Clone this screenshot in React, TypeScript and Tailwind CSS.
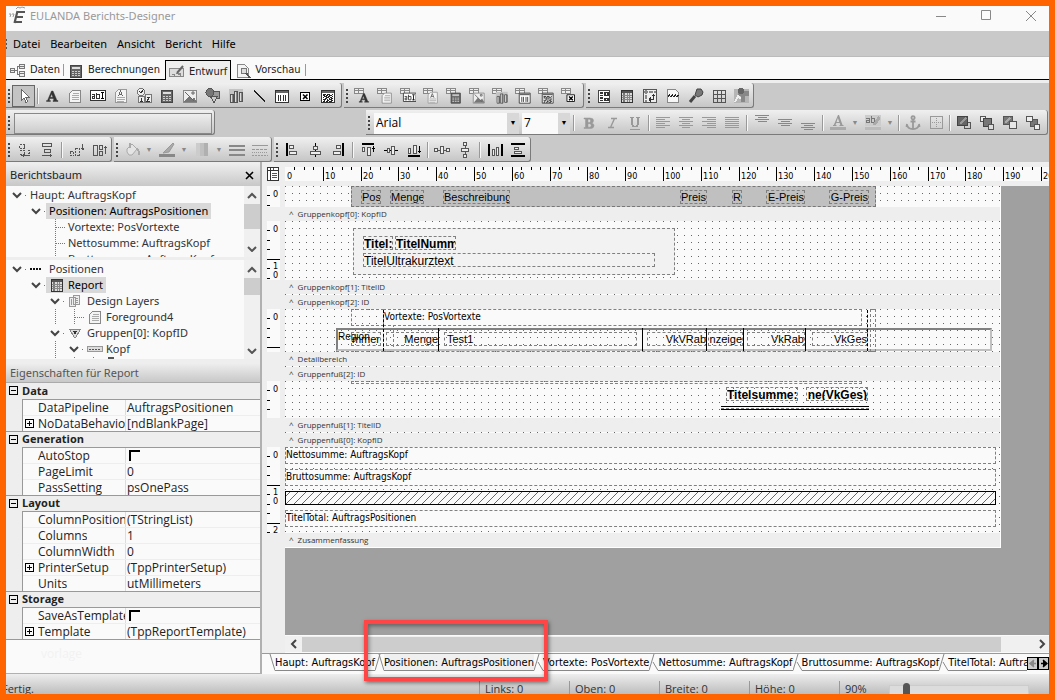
import { Fragment, type ReactNode } from "react";

const ui = "font-['Open_Sans',sans-serif]";
const tree = "font-['Noto_Sans',sans-serif]";
const narrow = "font-['DejaVu_Sans_Condensed','DejaVu_Sans',sans-serif]";
const arial = "font-['Liberation_Sans',Arial,sans-serif]";

/* ---------- icons ---------- */

function Icon({ children, soft }: { children: ReactNode; soft?: boolean }) {
  return (
    <svg
      width="16"
      height="16"
      viewBox="0 0 16 16"
      fill="none"
      stroke="#555"
      shapeRendering={soft ? "auto" : "crispEdges"}
      className="shrink-0"
      aria-hidden="true"
    >
      {children}
    </svg>
  );
}

const page = (
  <>
    <path d="M5.5 2.5h8v12h-11v-9z" fill="#f4f4f4" stroke="#888" />
    <path d="M6 5.5h6M5 7.5h7M5 9.5h7M5 11.5h7" stroke="#aaa" />
  </>
);
const calc = (
  <>
    <path d="M2.5 2.5h11v12h-11z" fill="#666" stroke="#444" />
    <path d="M4 4.5h8M4 5.5h8" stroke="#ddd" />
    <path d="M4 8.5h2m1 0h2m1 0h2M4 10.5h2m1 0h2m1 0h2M4 12.5h2m1 0h2m1 0h2" stroke="#ccc" />
  </>
);
const picture = (
  <>
    <path d="M1.5 2.5h13v12h-13z" fill="#eee" stroke="#888" />
    <path d="M2 14l5-6 3 3 2-2 3 5z" fill="#777" stroke="none" />
    <path d="M3 4l9 9M10 4h2v2h-2z" stroke="#666" shapeRendering="auto" />
  </>
);
const charts = (
  <>
    <path d="M1 1h14v12H1z" fill="#c4c4c4" stroke="none" />
    <path d="M2.5 6.5h3v8h-3zM6.5 3.5h3v11h-3zM11.5 4.5h3v9h-3z" fill="#888" stroke="#555" />
    <path d="M3.5 7v7M7.5 4v10M12.5 5v8" stroke="#ddd" />
  </>
);
const barcode = (
  <>
    <path d="M1.5 2.5h13v12h-13z" fill="#fff" stroke="#333" />
    <path d="M2 4h12" stroke="#666" strokeWidth="2" />
    <path d="M4.5 7v6M6.5 7v6M9.5 7v6M11.5 7v6" stroke="#333" />
  </>
);
const matrix = (
  <>
    <path d="M1.5 2.5h13v12h-13z" fill="#fff" stroke="#333" />
    <path d="M2 4h12" stroke="#666" strokeWidth="2" />
    <path
      d="M3 6.5h3m1 0h3m2 0h1M3 7.5h2m1 0h2m1 0h3M4 8.5h3m1 0h2m2 0h1M3 9.5h1m2 0h3m1 0h2M5 10.5h2m2 0h1m1 0h2M3 11.5h3m1 0h1m1 0h3M4 12.5h1m2 0h2m2 0h2M3 13.5h2m1 0h2m1 0h3"
      stroke="#222"
    />
  </>
);
const xBox = (
  <>
    <path d="M3.5 4.5h9v8h-9z" fill="#fff" stroke="#000" />
    <path d="M6 6.5l4.5 4.5M10.5 6.5L6 11" stroke="#000" strokeWidth="1.6" shapeRendering="auto" />
  </>
);
const letterA = (
  <path
    d="M7.5 3H9l4 9.5h1v1H9v-1h1l-.7-2H5.800l-.6 2h1.200v1H2.500v-1h1zM7.600 6L6.300 9.300h2.600z"
    fill="#333"
    stroke="#333"
    strokeWidth=".4"
    shapeRendering="auto"
  />
);
const memoA = (
  <>
    <path d="M5.5 1.5h8v13h-11v-10z" fill="#f4f4f4" stroke="#999" />
    <path d="M4 9.5h8M4 11.5h8M4 13.5h7" stroke="#aaa" />
    <path d="M5.500 8l2-5 2 5M6 6.500h3" stroke="#666" />
  </>
);
const editBox = (
  <>
    <path d="M.5 2.5h15v10H.5z" fill="#fff" stroke="#333" />
    <path d="M2 6.5h2.500v4H2.500v-2H4M6.500 4.500v6h3v-4h-3" stroke="#333" />
    <path d="M11 4.5h3M12.500 5v6M11 10.500h3" stroke="#000" />
  </>
);

const tools: Record<string, ReactNode> = {
  cursor: <path d="M5.5 1.5v11L8 10l2 4.500 1.800-.8-2-4.300h3.500z" fill="#fff" stroke="#666" />,
  label: letterA,
  memo: page,
  edit: editBox,
  richText: memoA,
  calcPages: (
    <>
      <circle cx="5" cy="4" r="3.5" fill="#eee" stroke="#777" />
      <path d="M2.5 8.5h6v6h-6zM9.5 6.5h6v8h-6z" fill="#eee" stroke="#777" />
      <path d="M3 3l2 2 3-4M5.500 9.500v4M4 13.500h3M11 9h3l-3 4h3" stroke="#333" />
    </>
  ),
  calc,
  picture,
  shapes: (
    <>
      <path d="M7.5 3.5h7v7h-7z" fill="#999" />
      <circle cx="5" cy="4.5" r="4" fill="#777" stroke="#555" />
      <path d="M5.5 8.5h7L9 14.500z" fill="#ccc" />
    </>
  ),
  charts,
  line: <path d="M3 3l11 10" stroke="#222" strokeWidth="1.5" />,
  barcode,
  xBox,
  matrix,
  subreport: (
    <>
      <path d="M2.5 2.5h11v12h-11z" fill="#fff" stroke="#444" />
      <path d="M4 5h3M4 7.500h3M9 4.500h3v3H9zM4 10h3M4 12.500h3M9 10.500h3v2H9z" stroke="#333" strokeWidth="1.5" />
    </>
  ),
  region: (
    <>
      <path d="M2.5 2.5h11v12h-11z" fill="#ddd" stroke="#333" />
      <path d="M3 4h10" stroke="#555" strokeWidth="2" />
      <path d="M4.5 5v9" stroke="#777" strokeWidth="2" />
      <path d="M3 7.5h10M3 9.5h10M3 11.5h10M8.5 5v9M10.5 5v9" stroke="#888" />
    </>
  ),
  cross: (
    <>
      <path d="M1.5 1.5h13v13h-13z" fill="#eee" stroke="#555" />
      <path d="M2 3.5h12M4 2v12" stroke="#888" strokeWidth="2" strokeDasharray="4 1" />
      <path d="M7 11.5h4.500v-5M7 11.500l2-2M7 11.500l2 2M11.500 6.500l-2 2M11.500 6.500l2 2" stroke="#333" />
    </>
  ),
  pageBreak: (
    <>
      <path d="M2.5 1.5h8l3 3v10h-11z" fill="#f6f6f6" stroke="#888" />
      <path d="M3 9l1.500-2L6 9l1.500-2L9 9l1.500-2L12 9l1.500-2" stroke="#222" />
    </>
  ),
  paintbox: (
    <>
      <path d="M7 8l-5 6" stroke="#444" strokeWidth="3" shapeRendering="auto" />
      <path d="M9 1h4l2 3-1 3-4 2-3-2z" fill="#777" stroke="#444" shapeRendering="auto" />
    </>
  ),
  grid: <path d="M2.5 2.5h12v12h-12zM6.5 2.5v12M10.5 2.5v12M2.5 6.5h12M2.5 10.5h12" />,
  map: (
    <>
      <path d="M0 1h15v14H0z" fill="#b5b5b5" stroke="none" />
      <path d="M4 3h11v5h-4v6H7V8H4z" fill="#888" stroke="none" />
      <path d="M1 14l3-6 3 3" stroke="#eee" strokeWidth="1.5" />
      <circle cx="7" cy="3" r="3" fill="#666" stroke="none" />
    </>
  ),
  bold: (
    <path
      d="M3 3h6q3.500 0 3.500 2.500T10.500 8Q13 8.500 13 10.700 13 13.500 9 13.500H3v-1h1.500V4H3zM7 4.200v3.300h1.500q1-.3 1-1.700T8.500 4.200zM7 8.700v3.500h1.700q1.500-.2 1.500-1.700T8.700 8.700z"
      fill="#999"
      stroke="#999"
      strokeWidth=".5"
      shapeRendering="auto"
    />
  ),
  italic: <path d="M7 3.5h6M4 12.5h6M10.500 3.500l-4 9" stroke="#999" strokeWidth="1.4" shapeRendering="auto" />,
  underline: (
    <path d="M3 2.5h4M9 2.5h4M5 3v6q0 2.500 3 2.500T11 9V3M3 14.500h10" stroke="#999" strokeWidth="1.5" />
  ),
  left: <path d="M1 2.5h14M1 4.5h9M1 6.5h14M1 8.5h9M1 10.5h14M1 12.5h9" stroke="#999" />,
  center: <path d="M1 2.5h14M4 4.5h8M1 6.5h14M4 8.5h8M1 10.5h14M4 12.5h8" stroke="#999" />,
  right: <path d="M1 2.5h14M6 4.5h9M1 6.5h14M6 8.5h9M1 10.5h14M6 12.5h9" stroke="#999" />,
  justify: <path d="M1 2.5h14M1 4.5h14M1 6.5h14M1 8.5h14M1 10.5h14M1 12.5h14" stroke="#999" />,
  vTop: <path d="M1 .5h14M4 2.5h9M1 4.5h14M4 6.5h9" stroke="#888" />,
  vMiddle: <path d="M1 4.5h14M4 6.5h9M1 8.5h14M4 10.5h9" stroke="#888" />,
  vBottom: <path d="M1 8.5h14M4 10.5h9M1 12.5h14M4 14.5h9" stroke="#888" />,
  fontColor: (
    <>
      <path
        d="M8 0h1l3.500 10h1v1h-4v-1h.8l-.6-2H6.300l-.8 2h1v1H3v-1h.8zM7.900 3L6.600 7h2.600z"
        fill="#999"
        stroke="none"
        shapeRendering="auto"
      />
      <path d="M0 13.5h16" stroke="#aaa" strokeWidth="3" />
    </>
  ),
  highlight: (
    <>
      <path d="M0 0h16v11H0z" fill="#ccc" stroke="none" />
      <path d="M1 3h3v4H1.500V5H4M6.500 1v6h3V3.500h-3" stroke="#777" />
      <path d="M14.500 2L9 10" stroke="#aaa" strokeWidth="3" />
      <path d="M0 13.5h16" stroke="#bbb" strokeWidth="3" />
    </>
  ),
  anchor: (
    <path
      d="M8 4.5V14M5.500 6.500h5M2 9.500Q2.500 14 8 14t6-4.500M2 9l-.5 3M14 9l.5 3M8 1.200a1.600 1.600 0 1 0 .1 0"
      stroke="#999"
      strokeWidth="1.8"
      shapeRendering="auto"
    />
  ),
  border: (
    <>
      <path d="M2.5 1.5h12v12h-12z" stroke="#999" />
      <path d="M8.5 3v10M4 7.5h10" stroke="#999" strokeDasharray="1 1" />
    </>
  ),
  toFront: (
    <>
      <path d="M8.5 7.5h6v6h-6z" fill="#ccc" stroke="#555" />
      <path d="M1.5 1.5h10v9h-10z" fill="#666" stroke="#444" />
      <path d="M4 9l6-6" stroke="#999" strokeWidth="2" />
    </>
  ),
  toBack: (
    <>
      <path d="M1.5 1.5h5v5h-5z" fill="#eee" />
      <path d="M4.5 3.5h8v8h-8z" fill="#777" stroke="#444" />
      <path d="M9.5 9.5h5v5h-5z" fill="#ddd" />
    </>
  ),
  forward: (
    <>
      <path d="M1.5 1.5h9v8h-9z" fill="#777" stroke="#555" />
      <path d="M3 8l5-5" stroke="#aaa" strokeWidth="2" />
      <path d="M7.5 6.5h7v7h-7z" fill="#e8e8e8" />
    </>
  ),
  backward: (
    <>
      <path d="M5.5 4.5h7v7h-7z" fill="#777" stroke="#555" />
      <path d="M1.5 1.5h6v5h-6zM9.5 9.5h5v5h-5z" fill="#eee" />
    </>
  ),
  moveLeft: (
    <>
      <path d="M3.5 2.5h5v4h-5zM3.5 8.5h5v4h-5M11.5 8.5h2v3h-2" strokeDasharray="2 1" />
      <path d="M5 13.5h9M7 12v3M8.5 2.5v4" />
    </>
  ),
  moveRight: (
    <>
      <path d="M3.5 1.5h9v3h-9zM5.5 7.5h6v3h-6z" />
      <path d="M3 13.5h10M11 12v3" />
    </>
  ),
  moveUp: (
    <>
      <path d="M1.5 9.5h3v4h-3zM6.5 6.5h4v7h-4z" strokeDasharray="2 1" />
      <path d="M13.5 2v6M12 6.500h3M12.500 7.500h2" />
    </>
  ),
  moveDown: (
    <>
      <path d="M1.5 3.5h4v10h-4zM7.5 3.5h3v4h-3zM7.5 9.5h3v4h-3z" />
      <path d="M13.5 4v8M12 5.5h3" />
    </>
  ),
  fill: (
    <>
      <path d="M3 7l5-5 5 5-5 6H5l-2-3z" fill="#e4e4e4" stroke="#aaa" shapeRendering="auto" />
      <path d="M13 7q3 3 1.500 6M6 1v5" stroke="#aaa" strokeWidth="2" />
    </>
  ),
  lineColor: (
    <>
      <path d="M14 1L8 7l-4 4 6-1 5-8z" fill="#aaa" stroke="#999" shapeRendering="auto" />
      <path d="M0 13.5h16" stroke="#888" strokeWidth="3" />
    </>
  ),
  gradient: (
    <>
      <path d="M2 1h4v13H2z" fill="#ccc" stroke="none" />
      <path d="M6 1h4v13H6z" fill="#c0c0c0" stroke="none" />
      <path d="M10 1h4v13h-4z" fill="#b0b0b0" stroke="none" />
    </>
  ),
  thickness: <path d="M0 3.5h16M0 8h16M0 13h16" stroke="#888" strokeWidth="2" />,
  dashStyle: (
    <>
      <path d="M0 3.5h16" stroke="#999" />
      <path d="M0 7.5h16" stroke="#999" strokeDasharray="3 1" />
      <path d="M0 10.5h16" stroke="#999" strokeDasharray="1 1" />
      <path d="M0 13.5h16" stroke="#999" strokeDasharray="2 1" />
    </>
  ),
  alignLeft: (
    <>
      <path d="M3 1v13" stroke="#000" strokeWidth="2" />
      <path d="M5.5 3.5h4v3h-4zM5.5 9.5h7v3h-7z" fill="#eee" />
    </>
  ),
  alignCenter: (
    <>
      <path d="M8.5 1v14" stroke="#000" />
      <path d="M6.5 4.5h4v3h-4zM3.5 9.5h10v3h-10z" fill="#eee" />
    </>
  ),
  alignRight: (
    <>
      <path d="M13 1v13" stroke="#000" strokeWidth="2" />
      <path d="M6.5 3.5h4v3h-4zM3.5 9.5h7v3h-7z" fill="#eee" />
    </>
  ),
  alignTop: (
    <>
      <path d="M2 2h12" stroke="#000" strokeWidth="2" />
      <path d="M2.5 5.5h2v4h-2zM7.5 5.5h3v8h-3z" fill="#eee" />
      <path d="M13.5 4v6M12 6.500h3" stroke="#000" />
    </>
  ),
  alignMiddle: (
    <>
      <path d="M1 8.5h14" stroke="#000" />
      <path d="M4.5 6.5h2v4h-2zM8.5 4.5h3v8h-3z" fill="#eee" />
    </>
  ),
  alignBottom: (
    <>
      <path d="M2 14h12" stroke="#000" strokeWidth="2" />
      <path d="M2.5 6.5h2v5h-2zM7.5 3.5h3v8h-3z" fill="#eee" />
      <path d="M13.5 4v7M12 9.500h3" stroke="#000" />
    </>
  ),
  spaceH: <path d="M.5 6.5h3v3h-3zM4 8.5h2M6.5 4.5h3v7h-3zM10 8.5h2M12.5 6.5h3v3h-3z" fill="#eee" />,
  spaceV: <path d="M6.5.5h3v3h-3zM8.5 4v2M4.5 6.5h7v3h-7zM8.5 10v2M6.5 12.5h3v3h-3z" fill="#eee" />,
  fitH: (
    <>
      <path d="M2 2v12M15 2v12" stroke="#000" strokeWidth="2" />
      <path d="M5.5 7.5h2v6h-2zM9.5 5.5h2v8h-2z" fill="#eee" />
    </>
  ),
  fitV: (
    <>
      <path d="M1 2h14M1 14h14" stroke="#000" strokeWidth="2" />
      <path d="M4.5 5.5h4v2h-4zM4.5 9.5h7v2h-7z" fill="#eee" />
    </>
  ),
};

// data aware components: small table in the corner, control shifted down
function DataIcon({ children }: { children: ReactNode }) {
  return (
    <Icon soft>
      <path d="M.5.5h9v5h-9zM.5 2.5h9M4.5.5v5" fill="#eee" stroke="#888" shapeRendering="crispEdges" />
      <g transform="translate(3 3) scale(.84)" stroke="#444">
        {children}
      </g>
    </Icon>
  );
}

/* ---------- toolbars ---------- */

function Grip() {
  return (
    <span className="flex w-[6px] shrink-0 flex-col items-center gap-[2px]">
      {[0, 1, 2, 3].map((i) => (
        <span key={i} className="size-[2px] bg-[#444]" />
      ))}
    </span>
  );
}

function Sep({ tight }: { tight?: boolean }) {
  return (
    <span className={`h-4 w-px shrink-0 bg-[#999] shadow-[1px_0_0_#f8f8f8] ${tight ? "mx-[2px]" : "mx-[3px]"}`} />
  );
}

function Drop() {
  return <span className="w-3 shrink-0 text-center text-[7px] text-[#888]">▼</span>;
}

function Bar({ children, className = "" }: { children: ReactNode; className?: string }) {
  return (
    <div
      role="toolbar"
      className={`flex h-[25px] shrink-0 items-center rounded-r-[3px] border-r border-b border-[#7a7a7a] bg-linear-to-b from-[#f0f0f0] to-[#c6c6c6] pt-[2px] ${className}`}
    >
      <Grip />
      {children}
    </div>
  );
}

function Tool({ name, active }: { name: string; active?: boolean }) {
  return (
    <button
      type="button"
      aria-label={name}
      className={`flex h-[22px] w-[23px] shrink-0 items-center justify-center ${
        active ? "border border-[#666] bg-[#c4c4c4]" : ""
      }`}
    >
      <Icon>{tools[name]}</Icon>
    </button>
  );
}

function Tools({ names }: { names: string[] }) {
  return (
    <>
      {names.map((n) => (
        <Tool key={n} name={n} />
      ))}
    </>
  );
}

const dataTools: [string, ReactNode][] = [
  ["DBText", letterA],
  ["DBMemo", page],
  ["DBEdit", editBox],
  ["DBRichText", memoA],
  ["DBCalc", calc],
  ["DBImage", picture],
  ["DBChart", charts],
  ["DBBarcode", barcode],
  ["DB2DBarcode", matrix],
  ["DBCheckBox", xBox],
];

function Toolbars() {
  return (
    <div className="bg-[#c9c9c9]">
      <div className="flex h-[27px] gap-[2px]">
        <Bar className="w-[336px]">
          <Tool name="cursor" active />
          <Sep tight />
          <Tools
            names={[
              "label", "memo", "edit", "richText", "calcPages", "calc", "picture",
              "shapes", "charts", "line", "barcode", "xBox", "matrix",
            ]}
          />
        </Bar>
        <Bar className="w-[240px]">
          {dataTools.map(([name, icon]) => (
            <button
              key={name}
              type="button"
              aria-label={name}
              className="flex h-[22px] w-[23px] shrink-0 items-center justify-center"
            >
              <DataIcon>{icon}</DataIcon>
            </button>
          ))}
        </Bar>
        <Bar className="w-[168px]">
          <Tools names={["subreport", "region", "cross", "pageBreak", "paintbox", "grid", "map"]} />
        </Bar>
      </div>
      <div className="flex h-[27px]">
        <Bar className="w-[209px]">
          <input
            aria-label="Feldwert"
            className="mx-[2px] h-[21px] min-w-0 flex-1 border border-[#888] bg-linear-to-b from-[#eee] to-[#ccc] px-1 text-xs"
          />
        </Bar>
        <Bar className="ml-[151px] w-[682px]">
          <div className="ml-[2px] flex h-[21px] w-[145px] shrink-0 items-center bg-[#fafafa]">
            <select aria-label="Schriftart" className={`min-w-0 flex-1 appearance-none pl-[2px] text-xs ${ui}`}>
              <option>Arial</option>
            </select>
            <span className="flex h-full w-3 items-center justify-center bg-[#d8d8d8] text-[7px]">▼</span>
          </div>
          <div className="ml-[3px] flex h-[21px] w-12 shrink-0 items-center bg-[#fafafa]">
            <select aria-label="Schriftgrad" className={`min-w-0 flex-1 appearance-none pl-[2px] text-xs ${ui}`}>
              <option>7</option>
            </select>
            <span className="flex h-full w-3 items-center justify-center bg-[#d8d8d8] text-[7px]">▼</span>
          </div>
          <Sep />
          <Tools names={["bold", "italic", "underline"]} />
          <Sep tight />
          <Tools names={["left", "center", "right", "justify"]} />
          <Sep />
          <Tools names={["vTop", "vMiddle", "vBottom"]} />
          <Sep />
          <Tool name="fontColor" />
          <Drop />
          <Tool name="highlight" />
          <Drop />
          <Sep tight />
          <Tools names={["anchor", "border"]} />
          <Sep tight />
          <Tools names={["toFront", "toBack", "forward", "backward"]} />
        </Bar>
      </div>
      <div className="flex h-[25px] gap-[2px]">
        <Bar className="w-[106px]">
          <Tools names={["moveLeft", "moveRight"]} />
          <Sep />
          <Tools names={["moveUp", "moveDown"]} />
        </Bar>
        <Bar className="w-[158px]">
          <Tool name="fill" />
          <Drop />
          <Tool name="lineColor" />
          <Drop />
          <Tool name="gradient" />
          <Drop />
          <Tools names={["thickness", "dashStyle"]} />
        </Bar>
        <Bar className="w-[257px]">
          <Tools names={["alignLeft", "alignCenter", "alignRight"]} />
          <Sep />
          <Tools names={["alignTop", "alignMiddle", "alignBottom"]} />
          <Sep tight />
          <Tools names={["spaceH", "spaceV"]} />
          <Sep />
          <Tools names={["fitH", "fitV"]} />
        </Bar>
      </div>
    </div>
  );
}

/* ---------- header ---------- */

function TitleBar() {
  return (
    <header className="flex h-[25px] shrink-0 items-start bg-[#fafafa] pl-[3px]">
      <svg width="18" height="20" viewBox="0 0 18 20" aria-hidden="true" fill="none" stroke="#999">
        <path d="M0 8h2l-1 3M3 8h2l-1 3M7 3l2-2 2 1 2-1 3 1" />
        <path d="M8 6h8M6.500 11h7.500M5 16h8M8.500 5l-3 12" stroke="#555" strokeWidth="2.2" />
      </svg>
      <h1 className={`ml-[3px] flex-1 text-[11px]/5 text-[#999] ${tree}`}>EULANDA Berichts-Designer</h1>
      <div className="flex gap-[9px]">
        {["M0 6.5h10", "M.5.5h9v9h-9z", "M0 1l10 10M10 1L0 11"].map((d) => (
          <button key={d} type="button" aria-label="Fenster" className="flex h-[19px] w-9 items-center justify-center">
            <svg width="10" height="12" fill="none" stroke="#888">
              <path d={d} />
            </svg>
          </button>
        ))}
      </div>
    </header>
  );
}

function MenuBar() {
  return (
    <nav className="flex h-[26px] shrink-0 items-center gap-[10px] border-b border-[#bbb] bg-[#c9c9c9] pt-px">
      <span className="-mr-1 flex flex-col gap-[2px]">
        {[0, 1, 2].map((i) => (
          <span key={i} className="h-[2px] w-px bg-[#555]" />
        ))}
      </span>
      {["Datei", "Bearbeiten", "Ansicht", "Bericht", "Hilfe"].map((m) => (
        <button key={m} type="button" className={`text-[11px] text-black ${tree}`}>
          {m}
        </button>
      ))}
    </nav>
  );
}

function ViewTabs() {
  const tab = `flex h-5 items-center gap-1 pt-[3px] text-[11px] text-[#222] ${narrow}`;
  return (
    <div className="flex h-[23px] shrink-0 items-end border-b border-black bg-[#fafafa] pl-1">
      <button type="button" className={tab}>
        <Icon>
          <path d="M.5 5.5h4v4h-4zM9.5 1.5h5v4h-5zM9.5 8.5h5v5h-5z" fill="#eee" stroke="#777" />
          <path d="M1 7.5h3M10 3.5h4M10 10.5h4M5 7.500h2v-4h2M7.500 8v3h2" stroke="#777" />
        </Icon>
        Daten
      </button>
      <span className="mr-1 mb-[3px] ml-[3px] h-3 w-px bg-[#999]" />
      <button type="button" className={tab}>
        <Icon>{calc}</Icon>
        Berechnungen
      </button>
      <button type="button" className={`-mb-px ml-[5px] border border-b-0 border-black bg-[#eee] px-[3px] ${tab}`}>
        <Icon>
          <path d="M.5 4.5h14v8H.5z" fill="#ddd" stroke="#888" />
          <path d="M2 10h4v2M6 9h6v3" fill="#888" stroke="none" />
          <path d="M14 2L8 9" stroke="#666" strokeWidth="2" shapeRendering="auto" />
        </Icon>
        Entwurf
      </button>
      <button type="button" className={`ml-1 ${tab}`}>
        <Icon>
          <path d="M2.5 1.5h7l4 4v9h-11z" fill="#f4f4f4" stroke="#888" />
          <circle cx="9" cy="8" r="3" fill="#ddd" stroke="#777" />
          <path d="M11 10l4 5" stroke="#555" strokeWidth="2" />
        </Icon>
        Vorschau
      </button>
      <span className="mb-[3px] ml-1 h-3 w-px bg-[#999]" />
    </div>
  );
}

/* ---------- sidebar ---------- */

type Cell = "" | "v" | "open" | "elbow";

function TreeRow({ cells, icon, text, selected }: { cells: Cell[]; icon?: ReactNode; text: string; selected?: boolean }) {
  return (
    <li className="flex h-4 pl-[2px]">
      {cells.map((c, i) => (
        <span key={i} className="w-[19px] shrink-0">
          <svg width="19" height="16" fill="none" stroke="#777" shapeRendering="crispEdges" aria-hidden="true">
            {c === "open" && (
              <>
                <path d="M5 6l4 4 4-4" stroke="#444" strokeWidth="2" shapeRendering="auto" />
                <path d="M17 8.5h2" strokeDasharray="1 1" />
              </>
            )}
            {(c === "v" || c === "elbow") && <path d="M9.5 0v16" strokeDasharray="1 1" />}
            {c === "elbow" && <path d="M10 8.5h9" strokeDasharray="1 1" />}
          </svg>
        </span>
      ))}
      <span className={`flex items-center gap-[3px] px-[3px] whitespace-nowrap ${selected ? "bg-[#d9d9d9] text-black" : ""}`}>
        {icon && <Icon>{icon}</Icon>}
        {text}
      </span>
    </li>
  );
}

function Chevron({ d }: { d: string }) {
  return (
    <button type="button" aria-label="Blättern" className="flex h-[18px] w-[15px] shrink-0 items-center justify-center">
      <svg width="10" height="8" fill="none" stroke="#555" strokeWidth="2">
        <path d={d} />
      </svg>
    </button>
  );
}

function TreeBox({ children, className, thumb }: { children: ReactNode; className: string; thumb: string }) {
  return (
    <div className={`flex overflow-hidden bg-[#fafafa] ${className}`}>
      <ul className={`min-w-0 flex-1 overflow-hidden pt-px text-[11px]/4 text-[#333] ${tree}`}>{children}</ul>
      <div className="flex w-4 shrink-0 flex-col items-center bg-[#f0f0f0]">
        <Chevron d="M1 7l4-4 4 4" />
        <span className={`w-full bg-[#cdcdcd] ${thumb}`} />
        <span className="flex-1" />
        <Chevron d="M1 3l4 4 4-4" />
      </div>
    </div>
  );
}

const props: [string, [string, string, boolean?][]][] = [
  ["Data", [["DataPipeline", "AuftragsPositionen"], ["NoDataBehaviors", "[ndBlankPage]", true]]],
  ["Generation", [["AutoStop", "check"], ["PageLimit", "0"], ["PassSetting", "psOnePass"]]],
  [
    "Layout",
    [
      ["ColumnPositions", "(TStringList)"],
      ["Columns", "1"],
      ["ColumnWidth", "0"],
      ["PrinterSetup", "(TppPrinterSetup)", true],
      ["Units", "utMillimeters"],
    ],
  ],
  ["Storage", [["SaveAsTemplate", "check"], ["Template", "(TppReportTemplate)", true]]],
];

function Toggle({ plus }: { plus?: boolean }) {
  return (
    <button type="button" aria-label={plus ? "Aufklappen" : "Zuklappen"} className="shrink-0">
      <svg width="9" height="9" fill="none" stroke="#000" shapeRendering="crispEdges" className="block">
        <path d={plus ? "M.5.5h8v8h-8zM2 4.5h5M4.500 2v5" : "M.5.5h8v8h-8zM2 4.5h5"} />
      </svg>
    </button>
  );
}

function Properties() {
  return (
    <div className={`flex-1 overflow-hidden bg-[#fafafa] text-xs/[14px] text-[#222] ${ui}`}>
      {props.map(([group, rows], g) => (
        <section key={group}>
          <h3
            className={`flex h-4 items-center gap-1 bg-[#eee] pb-px pl-[3px] text-[11px]/[14px] font-bold ${
              g ? "border-t border-[#999]" : ""
            }`}
          >
            <Toggle />
            {group}
          </h3>
          <div className="bg-[#eee] pl-4">
            <div className="border-t border-l border-[#999] bg-[#fafafa]">
              {rows.map(([name, value, plus], i) => (
                <div key={name} className={`flex ${i ? "h-4 border-t border-[#eee]" : "h-[15px]"}`}>
                  <div className="flex w-[103px] shrink-0 items-center overflow-hidden border-r border-[#ddd] pl-[2px]">
                    <span className="w-[13px] shrink-0">{plus && <Toggle plus />}</span>
                    <span className="overflow-hidden whitespace-nowrap">{name}</span>
                  </div>
                  <div className="flex items-center pl-px whitespace-nowrap">
                    {value === "check" ? (
                      <input
                        type="checkbox"
                        aria-label={name}
                        className="ml-[2px] size-[11px] appearance-none border-t-2 border-l-2 border-black"
                      />
                    ) : (
                      value
                    )}
                  </div>
                </div>
              ))}
            </div>
          </div>
        </section>
      ))}
      <div className="border-t border-[#999] pt-[7px] pl-[35px] text-[#f2f2f2]">vorlage</div>
    </div>
  );
}

function Sidebar() {
  const head = `flex shrink-0 items-center border-[#aaa] bg-linear-to-b from-[#efefef] to-[#c8c8c8] pt-px pl-1 text-[11px] ${tree}`;
  return (
    <aside className="flex w-[256px] shrink-0 flex-col border-r-2 border-b border-[#b0b0b0] bg-[#eee]">
      <h2 className={`${head} mt-px h-[23px] justify-between text-[#222]`}>
        Berichtsbaum
        <button type="button" aria-label="Schließen" className="mr-[6px]">
          <svg width="9" height="9" stroke="#000" strokeWidth="1.6">
            <path d="M1 1l7 7M8 1L1 8" />
          </svg>
        </button>
      </h2>
      <TreeBox className="h-[71px]" thumb="h-[25px]">
        <TreeRow cells={["open"]} text="Haupt: AuftragsKopf" />
        <TreeRow cells={["", "open"]} text="Positionen: AuftragsPositionen" selected />
        <TreeRow cells={["", "", "elbow"]} text="Vortexte: PosVortexte" />
        <TreeRow cells={["", "", "elbow"]} text="Nettosumme: AuftragsKopf" />
        <TreeRow cells={["", "", "elbow"]} text="Bruttosumme: AuftragsKopf" />
      </TreeBox>
      <TreeBox className="mt-[3px] h-[99px]" thumb="h-[17px]">
        <TreeRow
          cells={["open"]}
          text="Positionen"
          icon={<path d="M0 8h12" stroke="#111" strokeWidth="2" strokeDasharray="2 1" />}
        />
        <TreeRow cells={["", "open"]} text="Report" selected icon={tools.region} />
        <TreeRow
          cells={["", "", "open"]}
          text="Design Layers"
          icon={
            <>
              <path d="M1.5 4.5h6v9h-6zM5.5 2.5h6v9h-6z" fill="#eee" stroke="#999" />
              <path d="M7 5.5h3M7 7.5h3M7 9.5h3M3.500 6v6" stroke="#999" />
            </>
          }
        />
        <TreeRow cells={["", "", "v", "elbow"]} text="Foreground4" icon={page} />
        <TreeRow
          cells={["", "", "open"]}
          text="Gruppen[0]: KopfID"
          icon={
            <>
              <path d="M1.5 4.5h11l-5 8h-1z" fill="#ddd" stroke="#888" />
              <path d="M5 6h4l-2 4z" fill="#333" stroke="none" />
            </>
          }
        />
        <TreeRow
          cells={["", "", "v", "open"]}
          text="Kopf"
          icon={
            <>
              <path d="M.5 5.5h15v5H.5z" fill="#ddd" stroke="#999" />
              <path d="M2 8.5h12" stroke="#555" strokeDasharray="2 1" />
            </>
          }
        />
        <TreeRow cells={["", "", "v", "v", "v"]} text="" icon={<circle cx="5" cy="3" r="3" fill="#555" />} />
      </TreeBox>
      <h2 className={`${head} mt-1 h-5 border-b text-[#555]`}>Eigenschaften für Report</h2>
      <Properties />
    </aside>
  );
}

/* ---------- design canvas ---------- */

const MM10 = 37.8;

function HRuler() {
  const marks = Array.from({ length: 84 }, (_, i) => i);
  return (
    <svg width="100%" height="14" className={narrow} fontSize="9" shapeRendering="crispEdges">
      <rect width="100%" height="14" fill="#fafafa" />
      {marks.map((i) => {
        const x = Math.round((i * MM10) / 4);
        return i % 4 ? (
          <rect key={i} x={x} width="1" height="3" fill="#000" />
        ) : (
          <Fragment key={i}>
            {i > 0 && <rect x={x} width="1" height="14" fill="#000" />}
            <text x={x + 2} y="12">
              {(i / 4) * 10}
            </text>
          </Fragment>
        );
      })}
    </svg>
  );
}

function VRuler({ height }: { height: number }) {
  const n = Math.floor(height / (MM10 / 4));
  return (
    <svg width="13" height={height} className={`block ${narrow}`} fontSize="9" shapeRendering="crispEdges">
      <rect width="13" height={height} fill="#fafafa" />
      {Array.from({ length: n }, (_, i) => i + 1).map((i) => (
        <rect key={i} y={Math.round((i * MM10) / 4)} width={i % 4 ? 3 : 13} height="1" fill="#000" />
      ))}
      <text x="6" y="11">0</text>
      {height > 50 && (
        <>
          <text x="6" y="48">1</text>
          <text x="6" y="57">0</text>
        </>
      )}
      {height > 80 && <text x="6" y="86">2</text>}
    </svg>
  );
}

type Item = { x: number; y: number; w: number; h?: number; text?: string; cls?: string };

function Items({ items }: { items: Item[] }) {
  return (
    <>
      {items.map((f, i) => (
        <div
          key={i}
          className={`absolute flex items-center overflow-hidden whitespace-nowrap ${
            f.cls ?? "border border-dashed border-[#808080]"
          }`}
          style={{ left: f.x, top: f.y, width: f.w, height: f.h ?? 14 }}
        >
          {f.text}
        </div>
      ))}
    </>
  );
}

const t11 = `border border-dashed border-[#808080] text-[11px] text-black ${arial}`;
const t11r = `${t11} justify-end`;
const t12 = `border border-dashed border-[#808080] pt-px text-xs text-black ${arial}`;
const sub = `items-start border border-dashed border-[#808080] bg-[#fafafa] text-[10px]/[13px] text-black ${narrow}`;

const bands: { h: number; label: string; items?: Item[] }[] = [
  {
    h: 21,
    label: "Gruppenkopf[0]: KopfID",
    items: [
      { x: 66, y: 0, w: 525, h: 21, cls: "border border-dashed border-[#777] bg-[#c0c0c0]" },
      { x: 76, y: 4, w: 20, text: "Pos", cls: t11 },
      { x: 105, y: 4, w: 34, text: "Menge", cls: t11 },
      { x: 158, y: 4, w: 67, text: "Beschreibung", cls: t11 },
      { x: 395, y: 4, w: 27, text: "Preis", cls: t11r },
      { x: 447, y: 4, w: 10, text: "R", cls: t11r },
      { x: 481, y: 4, w: 39, text: "E-Preis", cls: t11r },
      { x: 544, y: 4, w: 40, text: "G-Preis", cls: t11r },
    ],
  },
  {
    h: 59,
    label: "Gruppenkopf[1]: TitelID",
    items: [
      { x: 68, y: 7, w: 322, h: 47, cls: "border border-dashed border-[#808080] bg-[#f2f2f2]" },
      { x: 78, y: 15, w: 30, text: "Titel:", cls: `${t12} font-bold` },
      { x: 110, y: 15, w: 61, text: "TitelNummer", cls: `${t12} font-bold` },
      { x: 78, y: 32, w: 292, text: "TitelUltrakurztext", cls: t12 },
    ],
  },
  { h: 1, label: "Gruppenkopf[2]: ID" },
  {
    h: 43,
    label: "Detailbereich",
    items: [
      { x: 66, y: 0, w: 33, h: 17 },
      { x: 98, y: 0, w: 11, h: 43 },
      { x: 98, y: 0, w: 479, h: 17, text: "Vortexte: PosVortexte", cls: sub },
      {
        x: 51,
        y: 19,
        w: 656,
        h: 23,
        cls: "border-2 border-t-[#808080] border-r-[#c0c0c0] border-b-[#c0c0c0] border-l-[#808080]",
      },
      { x: 53, y: 21, w: 40, h: 12, text: "Region", cls: `text-[10px] text-black ${arial}` },
      { x: 66, y: 23, w: 30, text: "mmer", cls: t11r },
      { x: 101, y: 23, w: 53, text: "Menge", cls: t11r },
      { x: 159, y: 23, w: 193, text: "Test1", cls: `${t11} pl-[2px]` },
      { x: 362, y: 23, w: 60, text: "VkVRab", cls: t11r },
      { x: 423, y: 23, w: 35, text: "nzeige", cls: t11r },
      { x: 462, y: 23, w: 58, text: "VkRab", cls: t11r },
      { x: 527, y: 23, w: 56, text: "VkGes", cls: t11r },
      ...[153, 357, 421, 458, 520].map((x) => ({ x, y: 19, w: 1, h: 23, cls: "bg-black" })),
      { x: 98, y: 1, w: 1, h: 41, cls: "border-l border-dashed border-black" },
      { x: 582, y: 1, w: 1, h: 41, cls: "border-l border-dashed border-black" },
      { x: 585, y: 0, w: 6, h: 43 },
      { x: 51, y: 42, w: 540, h: 1, cls: "border-t border-dashed border-[#808080]" },
    ],
  },
  { h: 1, label: "Gruppenfuß[2]: ID" },
  {
    h: 37,
    label: "Gruppenfuß[1]: TitelID",
    items: [
      { x: 66, y: 0, w: 511, h: 3 },
      { x: 441, y: 6, w: 72, text: "Titelsumme:", cls: `${t12} font-bold` },
      { x: 521, y: 6, w: 62, text: "ne(VkGes)", cls: `${t12} justify-end font-bold` },
      { x: 436, y: 25, w: 148, h: 4, cls: "border-y border-black" },
      { x: 436, y: 27, w: 148, h: 1, cls: "border-t border-dashed border-[#808080]" },
    ],
  },
  { h: 1, label: "Gruppenfuß[0]: KopfID" },
  {
    h: 86,
    label: "Zusammenfassung",
    items: [
      { x: 0, y: 0, w: 711, h: 17, text: "Nettosumme: AuftragsKopf", cls: sub },
      { x: 0, y: 22, w: 711, h: 17, text: "Bruttosumme: AuftragsKopf", cls: sub },
      { x: 0, y: 63, w: 711, h: 17, text: "TitelTotal: AuftragsPositionen", cls: sub },
    ],
  },
];

function PageBreak() {
  return (
    <svg className="absolute top-[44px] left-0 border border-black" width="711" height="14">
      <pattern id="hatch" width="8" height="12" patternUnits="userSpaceOnUse">
        <path d="M-8 12L4 0M0 12L12 0" stroke="#444" strokeWidth=".8" fill="none" />
      </pattern>
      <rect width="711" height="12" fill="url(#hatch)" className="bg-[#fafafa]" />
    </svg>
  );
}

const sheetTabs = [
  "Haupt: AuftragsKopf",
  "Positionen: AuftragsPositionen",
  "Vortexte: PosVortexte",
  "Nettosumme: AuftragsKopf",
  "Bruttosumme: AuftragsKopf",
  "TitelTotal: AuftragsPositionen",
];

function SheetTabs() {
  return (
    <div className="flex h-[21px] shrink-0 border-t border-[#999] bg-[#fafafa] pl-1">
      <div className="flex min-w-0 flex-1 overflow-hidden">
        {sheetTabs.map((t, i) => (
          <Fragment key={t}>
            <svg width="9" height="17" className="shrink-0" fill="none" stroke="#888" aria-hidden="true">
              {i > 0 && <path d="M0 16.500L5 0" />}
              <path d={i < 2 ? "M4 0l5 16.500" : "M4 8l5 8.500"} />
            </svg>
            <button
              type="button"
              className={`h-[17px] shrink-0 border-b border-[#888] pt-px text-[11px] whitespace-nowrap text-black ${
                i === 1 ? "bg-[#f0f0f0]" : ""
              } ${narrow}`}
            >
              {t}
            </button>
          </Fragment>
        ))}
      </div>
      {["M6 2L2 5.500 6 9M2 5.500h6", "M4 2l4 3.500L4 9M2 5.500h6"].map((d, i) => (
        <button
          key={d}
          type="button"
          aria-label={i ? "Weiter" : "Zurück"}
          className="mt-[3px] flex h-[13px] w-[11px] shrink-0 items-center justify-center border border-black bg-[#ccc]"
        >
          <svg width="10" height="11" fill={i ? "#000" : "#888"} stroke={i ? "#000" : "#888"} strokeWidth="1.5">
            <path d={d} />
          </svg>
        </button>
      ))}
    </div>
  );
}

function Designer() {
  return (
    <main className="flex min-w-0 flex-1 flex-col bg-[#eee]">
      <div className="flex h-6 shrink-0 items-start gap-[6px] pt-[5px] pl-[5px]">
        <svg width="12" height="14" fill="#fff" stroke="#333" shapeRendering="crispEdges" className="shrink-0">
          <path d="M.5.5h11v13H.5zM.5 3.5h11M3.5.5v13" />
          <path d="M5 6.5h5M5 8.5h5M5 10.5h5M6.5 1v2" stroke="#555" />
        </svg>
        <HRuler />
      </div>
      <div className="flex min-h-0 flex-1 overflow-hidden">
        <div className="w-[23px] shrink-0 pl-[5px]">
          {bands.map((b) => (
            <div key={b.label} className="pb-[14px]">
              {b.h > 1 ? <VRuler height={b.h} /> : <div className="h-px" />}
            </div>
          ))}
        </div>
        <div className="min-w-0 flex-1 overflow-hidden bg-[#a0a0a0]">
          <div className="w-[716px] border-r border-b border-white">
            {bands.map((b) => (
              <section key={b.label}>
                <div
                  className="relative bg-[#666] bg-[linear-gradient(to_right,transparent_1px,#fafafa_1px),linear-gradient(to_bottom,transparent_1px,#fafafa_1px)] bg-[length:7px_7px]"
                  style={{ height: b.h }}
                >
                  {b.items && <Items items={b.items} />}
                  {b.h === 86 && (
                    <div className="absolute top-[44px] left-0 h-[14px] w-[711px] bg-[#fafafa]" />
                  )}
                  {b.h === 86 && <PageBreak />}
                </div>
                <h3 className={`flex h-[14px] items-center gap-1 bg-[#eee] pl-1 text-[8px] text-[#333] ${ui}`}>
                  <span>^</span>
                  {b.label}
                </h3>
              </section>
            ))}
          </div>
        </div>
      </div>
      <div className="ml-[23px] flex h-[18px] shrink-0 items-center border-y border-[#fafafa] bg-[#f0f0f0]">
        <button type="button" aria-label="Links" className="flex w-[17px] justify-center">
          <svg width="8" height="10" fill="none" stroke="#444" strokeWidth="2">
            <path d="M6 1L2 5l4 4" />
          </svg>
        </button>
        <span className="h-[15px] flex-1 bg-[#cdcdcd]" />
        <button type="button" aria-label="Rechts" className="flex w-12 justify-end pr-[2px]">
          <svg width="8" height="10" fill="none" stroke="#444" strokeWidth="2">
            <path d="M1 1l4 4-4 4" />
          </svg>
        </button>
      </div>
      <SheetTabs />
    </main>
  );
}

function StatusBar() {
  return (
    <footer
      className={`flex h-5 shrink-0 items-start overflow-hidden bg-linear-to-b from-[#eee] to-[#bdbdbd] text-[11px]/4 text-[#333] ${ui}`}
    >
      <span className="-ml-1 flex-1 pt-[7px]">Fertig.</span>
      {["Links: 0", "Oben: 0", "Breite: 0", "Höhe: 0"].map((s) => (
        <span key={s} className="mt-[7px] w-[90px] border-l border-[#999] pl-[5px]">
          {s}
        </span>
      ))}
      <label htmlFor="zoom" className="mt-[7px] w-[50px] border-l border-[#999] pl-[5px]">
        90%
      </label>
      <input
        id="zoom"
        type="range"
        defaultValue="10"
        className="mt-[11px] mr-5 h-4 w-[140px] appearance-none border border-[#ccc] bg-[#dcdcdc] [&::-webkit-slider-thumb]:h-5 [&::-webkit-slider-thumb]:w-[7px] [&::-webkit-slider-thumb]:appearance-none [&::-webkit-slider-thumb]:rounded-t [&::-webkit-slider-thumb]:bg-[#555]"
      />
    </footer>
  );
}

export default function App() {
  return (
    <div className="relative flex h-screen flex-col overflow-hidden border-[6px] border-[#ff6400] bg-[#eee]">
      <TitleBar />
      <MenuBar />
      <ViewTabs />
      <div className="h-[3px] shrink-0 bg-[#eee]" />
      <Toolbars />
      <div className="flex min-h-0 flex-1">
        <Sidebar />
        <Designer />
      </div>
      <StatusBar />
      <div className="pointer-events-none absolute top-[614px] left-[358px] h-[61px] w-[184px] border-4 border-[#ff4545] shadow-[1px_2px_4px_rgba(0,0,0,0.5),inset_1px_2px_4px_rgba(0,0,0,0.4)]" />
    </div>
  );
}
